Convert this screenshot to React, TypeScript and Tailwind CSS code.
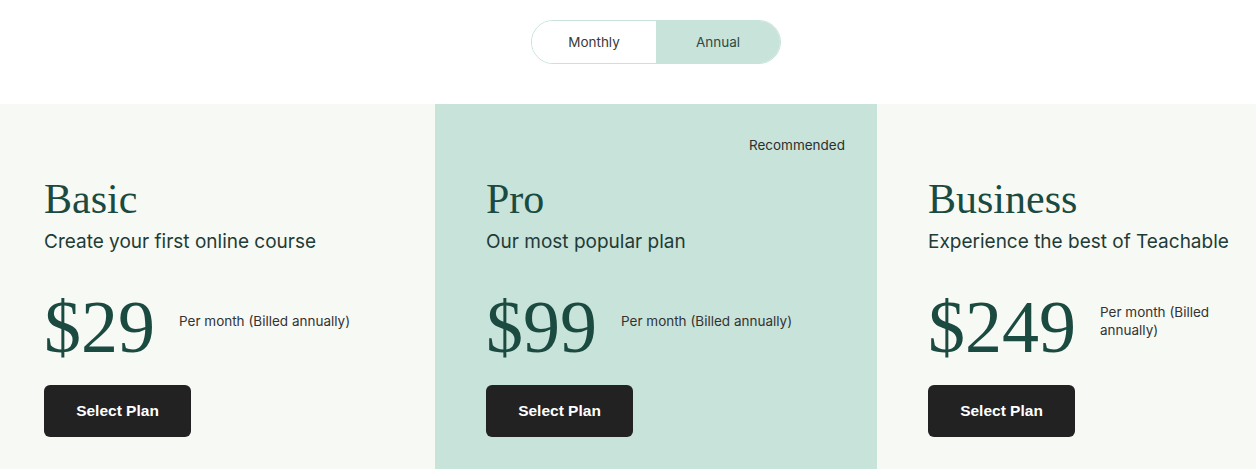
import React from "react";

const plans = [
  { name: "Basic", sub: "Create your first online course", price: "$29", rec: false, pr: "pr-[51px]" },
  { name: "Pro", sub: "Our most popular plan", price: "$99", rec: true, pr: "pr-[51px]" },
  { name: "Business", sub: "Experience the best of Teachable", price: "$249", rec: false, pr: "pr-[70px]" },
];

export default function App() {
  return (
    <div className="w-[1256px] h-[469px] overflow-hidden bg-white" style={{ fontFamily: "Inter, 'Noto Sans', sans-serif" }}>
      <div className="w-[1326px] -ml-[7px]">
        <div className="flex justify-center pt-[20px] h-[104px]">
          <div className="flex h-[44px] w-[250px] rounded-full border border-[#c8e3d9] overflow-hidden">
            <div className="flex-1 flex items-center justify-center text-[13.5px] text-[#3a3a3a] bg-white">Monthly</div>
            <div className="flex-1 flex items-center justify-center text-[13.5px] text-[#2f4a44] bg-[#c8e3d9]">Annual</div>
          </div>
        </div>
        <div className="flex">
          {plans.map((p) => (
            <div key={p.name} className={`w-[442px] pl-[51px] ${p.pr} shrink-0 h-[365px] pt-[31px] ${p.rec ? "bg-[#c8e3d9]" : "bg-[#f7f9f4]"}`}>
              <div className="h-[20px] flex justify-end items-center text-[13.5px] text-[#2e2e2e] -mr-[19px]">
                {p.rec ? "Recommended" : ""}
              </div>
              <div className="mt-[20px] h-[48px] leading-[48px] text-[42px] text-[#1b4a41]" style={{ fontFamily: "'Liberation Serif', 'DejaVu Serif', serif" }}>
                {p.name}
              </div>
              <div className="mt-[5px] h-[28px] leading-[28px] text-[19px] text-[#1f3b37]">{p.sub}</div>
              <div className="mt-[34px] flex items-center">
                <div className="h-[74px] leading-[74px] text-[74px] text-[#1b4a41] shrink-0" style={{ fontFamily: "'Liberation Serif', 'DejaVu Serif', serif" }}>
                  {p.price}
                </div>
                <div className="ml-[24px] mb-[12px] text-[13.5px] leading-[18px] text-[#333]">Per month (Billed annually)</div>
              </div>
              <button className="mt-[21px] w-[147px] h-[52px] rounded-[6px] bg-[#222222] text-white text-[15.5px] font-bold" style={{ fontFamily: "'Liberation Sans', Arial, sans-serif" }}>
                Select Plan
              </button>
            </div>
          ))}
        </div>
      </div>
    </div>
  );
}
